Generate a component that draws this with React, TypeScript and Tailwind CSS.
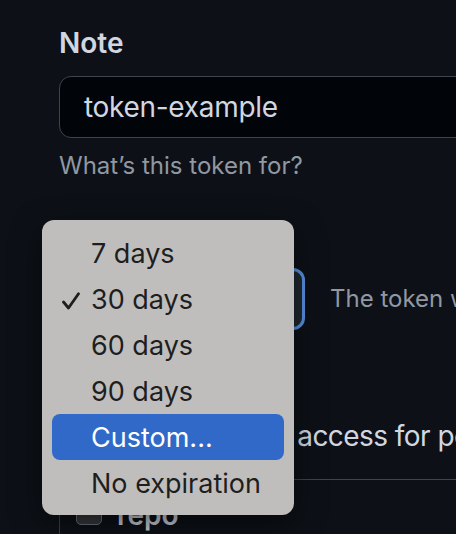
import React from 'react';

const options = ['7 days', '30 days', '60 days', '90 days', 'Custom...', 'No expiration'];

const ExpirationMenu: React.FC = () => {
  return (
    <div className="absolute left-[42px] top-[220px] w-[252px] rounded-[12px] bg-[#c0bebd] px-[10px] pb-[9px] pt-[10px] shadow-[0_10px_30px_rgba(0,0,0,0.55)]">
      {options.map((label) => {
        const active = label === 'Custom...';
        const checked = label === '30 days';
        return (
          <div
            key={label}
            className={
              active
                ? 'flex h-[46px] items-center rounded-[8px] bg-[#3069c8] text-white'
                : 'flex h-[46px] items-center text-[#1e1e1e]'
            }
          >
            <span className="flex w-[39px] shrink-0 items-center pl-[10px] pt-[4px]">
              {checked && (
                <svg width="18" height="18" viewBox="0 0 18 18" fill="none">
                  <path d="M1.5 10 L6.5 16 L16.5 1.8" stroke="#1e1e1e" strokeWidth="2.8" strokeLinecap="round" strokeLinejoin="round" />
                </svg>
              )}
            </span>
            <span className="pt-[2px] text-[27px] leading-[46px]">{label}</span>
          </div>
        );
      })}
    </div>
  );
};

export default function App() {
  return (
    <div className="relative h-[534px] w-[456px] overflow-hidden bg-[#0d1117] font-['Inter','Noto_Sans',sans-serif]">
      <div className="pl-[59px] pt-[25px]">
        <label className="block text-[28px] font-semibold leading-[36px] text-[#d1d7e0]">Note</label>
        <div className="mt-[15px] flex h-[62px] w-[430px] items-center rounded-[12px] border border-[#3d444d] bg-[#010409] pl-[24px] text-[28px] leading-[36px] tracking-[-0.3px] text-[#d1d7e0]">
          token-example
        </div>
        <p className="mt-[12px] text-[24px] leading-[32px] text-[#9198a1]">What’s this token for?</p>

        <div className="mt-[40px]">
          <label className="block text-[28px] font-semibold leading-[36px] text-[#d1d7e0]">Expiration *</label>
          <div className="mt-[10px] flex items-center gap-[25px] whitespace-nowrap">
            <div className="flex h-[62px] w-[246px] shrink-0 items-center rounded-[12px] border-[3px] border-[#5a94e6] bg-[#212830] pl-[20px] text-[28px] text-[#d1d7e0]">
              30 days
            </div>
            <span className="text-[24px] leading-[32px] text-[#9198a1]">The token will expire on Sat, Jun 8 2024</span>
          </div>
        </div>

        <h3 className="mt-[40px] text-[28px] font-semibold leading-[36px] text-[#d1d7e0]">Select scopes</h3>
        <p className="mt-[12px] whitespace-nowrap text-[28px] leading-[36px] tracking-[-0.55px] text-[#d1d7e0]">
          Scopes define the access for personal tokens.
        </p>

        <div className="mt-[25px] h-[80px] w-[420px] rounded-tl-[12px] border-l border-t border-[#3d444d] pl-[16px] pt-[17px]">
          <div className="flex items-start gap-[15px]">
            <span className="mt-[2px] block h-[26px] w-[26px] rounded-[5px] border border-[#6e7681] bg-[#3a3b3d]" />
            <span className="text-[28px] font-semibold leading-[36px] text-[#d1d7e0]">repo</span>
          </div>
        </div>
      </div>

      <ExpirationMenu />
    </div>
  );
}
